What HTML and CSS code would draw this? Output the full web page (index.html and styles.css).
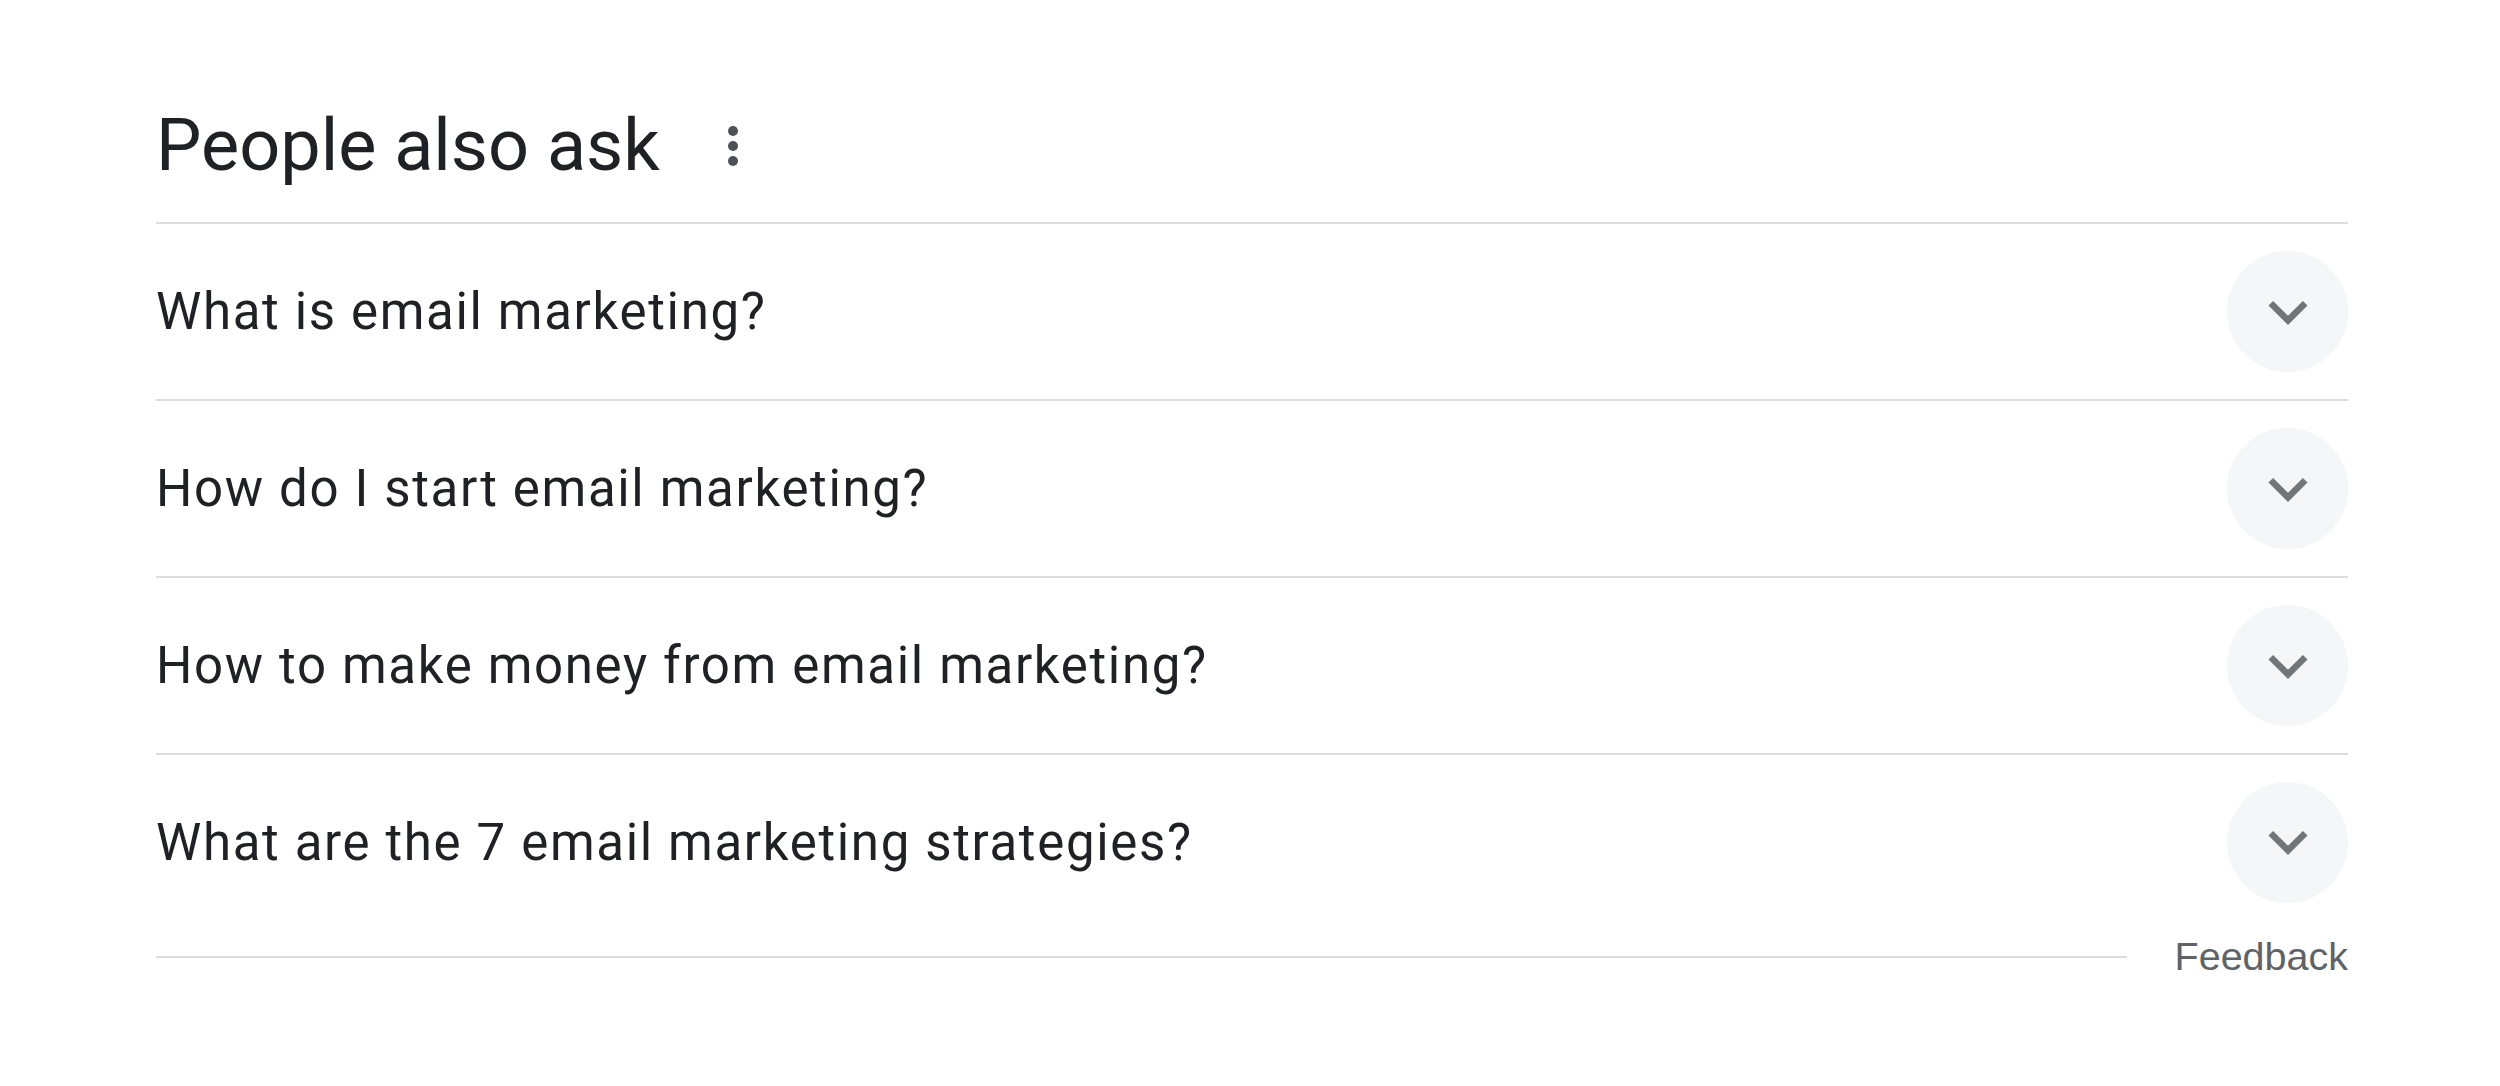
FILE: index.html
```html
<!DOCTYPE html>
<html>
<head>
<meta charset="utf-8">
<link rel="stylesheet" href="styles.css">
</head>
<body>
<div class="paa">
  <div class="header">
    <h2 class="title">People also ask</h2>
    <svg class="more" viewBox="0 0 24 24" width="60" height="60"><circle cx="12" cy="6" r="2"/><circle cx="12" cy="12" r="2"/><circle cx="12" cy="18" r="2"/></svg>
  </div>
  <div class="row"><span class="q">What is email marketing?</span><span class="btn"><svg viewBox="0 0 24 24" width="78" height="78"><path d="M16.59 8.59L12 13.17 7.41 8.59 6 10l6 6 6-6z"/></svg></span></div>
  <div class="row"><span class="q">How do I start email marketing?</span><span class="btn"><svg viewBox="0 0 24 24" width="78" height="78"><path d="M16.59 8.59L12 13.17 7.41 8.59 6 10l6 6 6-6z"/></svg></span></div>
  <div class="row"><span class="q">How to make money from email marketing?</span><span class="btn"><svg viewBox="0 0 24 24" width="78" height="78"><path d="M16.59 8.59L12 13.17 7.41 8.59 6 10l6 6 6-6z"/></svg></span></div>
  <div class="row last"><span class="q">What are the 7 email marketing strategies?</span><span class="btn"><svg viewBox="0 0 24 24" width="78" height="78"><path d="M16.59 8.59L12 13.17 7.41 8.59 6 10l6 6 6-6z"/></svg></span></div>
  <div class="feedback"><div class="fline"></div><span class="ftext">Feedback</span></div>
</div>
</body>
</html>
```
FILE: styles.css
```css
html, body { margin: 0; padding: 0; background: #fff; }
.paa { margin-left: 156px; width: 2192px; font-family: Roboto, "Noto Sans", sans-serif; color: #202124; }
.header { margin-top: 70px; height: 152px; display: flex; align-items: center; border-bottom: 2px solid #dadce0; }
.title { margin: 0; font-weight: 400; font-size: 72px; line-height: 1; }
.more { fill: #4d5156; margin-left: 43px; }
.row { height: 175px; display: flex; align-items: center; justify-content: space-between; border-bottom: 2px solid #dadce0; }
.row.last { border-bottom: none; height: 174px; }
.q { font-size: 51px; letter-spacing: 1.65px; line-height: 1; }
.btn { width: 121px; height: 121px; border-radius: 50%; background: #f5f6f7; display: flex; align-items: center; justify-content: center; }
.btn svg { fill: #70757a; }
.feedback { height: 56px; display: flex; align-items: center; }
.fline { flex: 1; height: 2px; background: #dadce0; }
.ftext { margin-left: 48px; font-family: "Liberation Sans", Arial, sans-serif; font-size: 39.5px; color: #5f6368; line-height: 1; }
```
